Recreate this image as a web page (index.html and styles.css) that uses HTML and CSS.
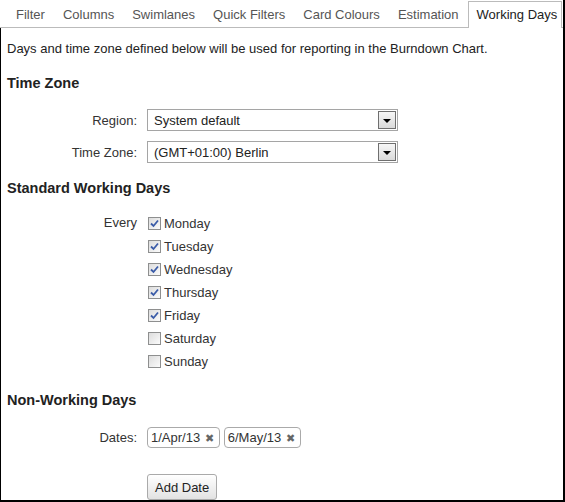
FILE: index.html
```html
<!DOCTYPE html>
<html lang="en">
<head>
    <meta charset="UTF-8">
    <title>Board config | Working Days</title>
    <link rel="stylesheet" href="styles.css">
</head>
<body>
    <div class="page">
        <ul class="tabs">
            <li>Filter</li>
            <li>Columns</li>
            <li>Swimlanes</li>
            <li>Quick Filters</li>
            <li>Card Colours</li>
            <li>Estimation</li>
            <li class="active">Working Days</li>
        </ul>
        <div class="panel">
            <p class="intro">Days and time zone defined below will be used for reporting in the Burndown Chart.</p>

            <h2 class="first">Time Zone</h2>
            <div class="field">
                <label>Region:</label>
                <div class="select">
                    <span>System default</span>
                    <span class="arrow"><i></i></span>
                </div>
            </div>
            <div class="field second">
                <label>Time Zone:</label>
                <div class="select">
                    <span>(GMT+01:00) Berlin</span>
                    <span class="arrow"><i></i></span>
                </div>
            </div>

            <h2 class="days-title">Standard Working Days</h2>
            <div class="field days">
                <label>Every</label>
                <div class="day-list" id="day-list"></div>
            </div>

            <h2 class="non-title">Non-Working Days</h2>
            <div class="field dates">
                <label>Dates:</label>
                <div class="chips">
                    <span class="chip">1/Apr/13 <b>&#x2716;</b></span>
                    <span class="chip">6/May/13 <b>&#x2716;</b></span>
                </div>
            </div>
            <div class="field add">
                <label></label>
                <div><button class="btn">Add Date</button></div>
            </div>
        </div>
    </div>

    <script>
        var days = [
            ['Monday', true], ['Tuesday', true], ['Wednesday', true],
            ['Thursday', true], ['Friday', true], ['Saturday', false], ['Sunday', false]
        ];
        var tick = '<svg width="9" height="9" viewBox="0 0 9 9"><path d="M1 4.5 L3.5 7 L8 1.5" fill="none" stroke="#3b5ca8" stroke-width="1.8"/></svg>';
        document.getElementById('day-list').innerHTML = days.map(function (d) {
            return '<div class="day"><span class="box">' + (d[1] ? tick : '') + '</span>' + d[0] + '</div>';
        }).join('');
    </script>
</body>
</html>
```

FILE: styles.css
```css
body {
    margin: 0;
    font-family: "Liberation Sans", Arial, sans-serif;
    font-size: 13px;
    color: #222;
    background: #fff;
}
.page {
    width: 565px;
    height: 502px;
    box-sizing: border-box;
    border-right: 2px solid #000;
    display: flex;
    flex-direction: column;
    overflow: hidden;
}
.tabs {
    list-style: none;
    margin: 0;
    padding: 1px 0 0 7px;
    display: flex;
    border-bottom: 1px solid #bbb;
    flex-shrink: 0;
}
.tabs li {
    padding: 5px 8px 4px;
    line-height: 16px;
    border: 1px solid transparent;
    border-bottom: none;
    color: #555;
    white-space: nowrap;
    flex-shrink: 0;
}
.tabs li.active {
    background: #fff;
    border-color: #bbb;
    color: #222;
    margin-bottom: -1px;
    padding-bottom: 5px;
    padding-right: 4px;
}
.panel {
    flex: 1;
    border-left: 1px solid #000;
    border-bottom: 2px solid #000;
    padding: 0 6px;
}
.intro {
    margin: 13px 0 0;
    line-height: 16px;
}
h2 {
    font-size: 14.5px;
    line-height: 18px;
    margin: 17px 0 0;
    color: #222;
}
h2.days-title {
    margin-top: 16px;
}
h2.non-title {
    margin-top: 18px;
}
.field {
    display: grid;
    grid-template-columns: 130px 1fr;
    column-gap: 10px;
    align-items: center;
    margin-top: 17px;
}
.field label {
    text-align: right;
    color: #333;
}
.field.second {
    margin-top: 10px;
}
.select {
    width: 251px;
    height: 22px;
    box-sizing: border-box;
    border: 1px solid #a5a5a5;
    display: flex;
    align-items: center;
    justify-content: space-between;
    padding: 0 1px 0 6px;
}
.arrow {
    width: 18px;
    height: 18px;
    box-sizing: border-box;
    border: 1px solid #6f6f6f;
    background: linear-gradient(#f6f6f6, #dadada);
    display: flex;
    align-items: center;
    justify-content: center;
}
.arrow i {
    width: 0;
    height: 0;
    border-left: 4px solid transparent;
    border-right: 4px solid transparent;
    border-top: 4px solid #000;
    margin-top: 2px;
}
.field.days {
    margin-top: 15px;
    align-items: start;
}
.field.days label {
    line-height: 21px;
}
.day {
    height: 23px;
    display: flex;
    align-items: center;
    color: #333;
}
.box {
    width: 13px;
    height: 13px;
    box-sizing: border-box;
    border: 1px solid #8e8f8f;
    background: linear-gradient(135deg, #dcdcdc, #fbfbfb);
    margin: 0 3px 0 1px;
    display: flex;
    align-items: center;
    justify-content: center;
}
.field.dates {
    margin-top: 18px;
}
.chips {
    display: flex;
    gap: 4px;
}
.chip {
    height: 21px;
    box-sizing: border-box;
    border: 1px solid #aaa;
    border-radius: 4px;
    padding: 0 5px 0 3px;
    line-height: 19px;
    color: #333;
}
.chip b {
    font-weight: normal;
    font-size: 11px;
    color: #666;
    margin-left: 1px;
}
.field.add {
    margin-top: 26px;
}
.btn {
    font-family: inherit;
    font-size: 13px;
    color: #222;
    height: 26px;
    padding: 0 7px;
    border: 1px solid #aaa;
    border-radius: 3px;
    background: linear-gradient(#fff, #e2e2e2);
}
```
